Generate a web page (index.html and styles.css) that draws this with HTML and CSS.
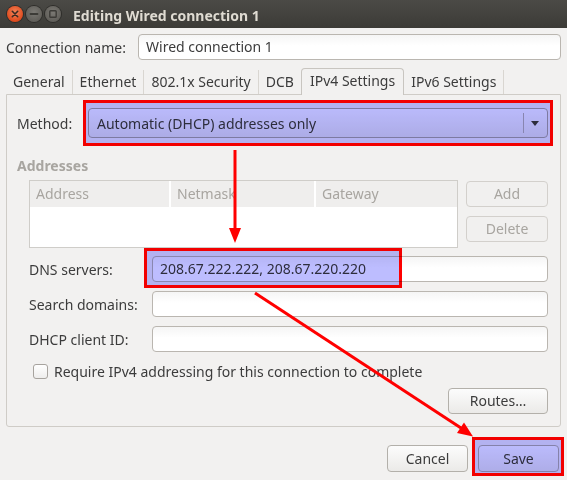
FILE: index.html
```html
<!DOCTYPE html>
<html>
<head>
<meta charset="utf-8">
<title>Editing Wired connection 1</title>
<link rel="stylesheet" href="styles.css">
</head>
<body>
<div class="window">
  <div class="titlebar">
    <div class="wbtns">
      <span class="wb close"><svg width="16" height="16" viewBox="0 0 16 16"><path d="M5.3 5.3 L10.7 10.7 M10.7 5.3 L5.3 10.7" stroke="#3a2a22" stroke-width="1.6" stroke-linecap="round"/></svg></span>
      <span class="wb gray"><svg width="16" height="16" viewBox="0 0 16 16"><path d="M4.5 8 H11.5" stroke="#3c3b37" stroke-width="1.8" stroke-linecap="round"/></svg></span>
      <span class="wb gray"><svg width="16" height="16" viewBox="0 0 16 16"><rect x="4.8" y="4.8" width="6.4" height="6.4" rx="0.8" fill="none" stroke="#3c3b37" stroke-width="1.4"/></svg></span>
    </div>
    <div class="title">Editing Wired connection 1</div>
  </div>

  <div class="content">
    <div class="conn-row">
      <div class="conn-label">Connection name:</div>
      <div class="entry conn-entry">Wired connection 1</div>
    </div>

    <div class="tabs">
      <div class="tab">General</div>
      <div class="tab">Ethernet</div>
      <div class="tab">802.1x Security</div>
      <div class="tab pre-active">DCB</div>
      <div class="tab active">IPv4 Settings</div>
      <div class="tab">IPv6 Settings</div>
    </div>

    <div class="panel">
      <div class="method-row">
        <div class="method-label">Method:</div>
        <div class="combo">
          <span class="combo-text">Automatic (DHCP) addresses only</span>
          <span class="combo-sep"></span>
          <span class="combo-arrow"></span>
        </div>
      </div>

      <div class="section-title">Addresses</div>

      <div class="addr">
        <div class="table">
          <div class="thead">
            <div class="th th-addr">Address</div>
            <div class="th th-mask">Netmask</div>
            <div class="th th-gw">Gateway</div>
          </div>
          <div class="tbody"></div>
        </div>
        <div class="addr-btns">
          <div class="btn disabled">Add</div>
          <div class="btn disabled">Delete</div>
        </div>
      </div>

      <div class="form">
        <div class="flabel">DNS servers:</div>
        <div class="entry">208.67.222.222, 208.67.220.220</div>
        <div class="flabel">Search domains:</div>
        <div class="entry"></div>
        <div class="flabel">DHCP client ID:</div>
        <div class="entry"></div>
      </div>

      <div class="check-row">
        <span class="checkbox"></span>
        <span class="check-label">Require IPv4 addressing for this connection to complete</span>
      </div>

      <div class="routes-row">
        <div class="btn routes">Routes…</div>
      </div>
    </div>

    <div class="dialog-btns">
      <div class="btn dlg">Cancel</div>
      <div class="btn dlg">Save</div>
    </div>
  </div>

  <div class="hl hl-method"></div>
  <div class="hl hl-dns"></div>
  <div class="hl hl-save"></div>

  <svg class="arrows" width="567" height="480" viewBox="0 0 567 480">
    <line x1="235" y1="150" x2="235" y2="230" stroke="#ff0000" stroke-width="3"/>
    <polygon points="229,228 241,228 235,243" fill="#ff0000"/>
    <line x1="255" y1="293" x2="461" y2="428" stroke="#ff0000" stroke-width="3"/>
    <polygon points="457,433 464,422.5 473,436.5" fill="#ff0000"/>
  </svg>
</div>
</body>
</html>
```

FILE: styles.css
```css
* { box-sizing: border-box; }
html, body { margin: 0; padding: 0; }
body {
  width: 567px;
  height: 480px;
  overflow: hidden;
  background: #f2f1f0;
  font-family: "Noto Sans", "DejaVu Sans", sans-serif;
  font-size: 14px;
  color: #3c3c3c;
}
.window { position: relative; width: 567px; height: 480px; }

/* title bar */
.titlebar {
  height: 28px;
  background: linear-gradient(#4b4a46, #3c3b37);
  display: flex;
  align-items: center;
  padding-left: 7px;
}
.wbtns { display: flex; gap: 3px; }
.wb {
  width: 16px; height: 16px;
  border-radius: 50%;
  display: flex;
}
.wb.close {
  background: radial-gradient(circle at 50% 40%, #f4855a, #df4a1d 70%);
  box-shadow: 0 0 0 1px #2e2d2a;
}
.wb.gray {
  background: radial-gradient(circle at 50% 40%, #7b7974, #5f5d58 75%);
  box-shadow: 0 0 0 1px #2e2d2a;
}
.title {
  margin-left: 12px;
  padding-top: 2px;
  font-weight: bold;
  font-size: 14px;
  color: #dfdbd2;
}

/* content */
.content { padding: 6px 6px 0 6px; }
.conn-row { display: flex; align-items: center; height: 26px; }
.conn-label { width: 132px; }
.entry {
  height: 26px;
  border: 1px solid #bab6b0;
  border-radius: 4px;
  background: linear-gradient(#f5f5f5, #ffffff 45%);
  padding-left: 7px;
  line-height: 24px;
  white-space: nowrap;
  overflow: hidden;
}
.conn-entry { flex: 1; }

/* tabs */
.tabs {
  margin-top: 8px;
  height: 26px;
  display: flex;
  align-items: flex-end;
}
.tab {
  height: 24px;
  line-height: 24px;
  padding: 0 7px;
  border-right: 1px solid #d9d6d1;
  white-space: nowrap;
}
.tab.pre-active { border-right: none; }
.tab.active {
  height: 27px;
  margin-bottom: -1px;
  padding: 0 8px;
  line-height: 24px;
  border: 1px solid #c8c5c0;
  border-bottom: none;
  border-radius: 4px 4px 0 0;
  background: #f2f1f0;
}

/* panel */
.panel {
  border: 1px solid #cfccc7;
  border-radius: 0 0 3px 3px;
  padding: 13px 12px 12px 10px;
}
.method-row { display: flex; align-items: center; height: 30px; }
.method-label { width: 71px; }
.combo {
  flex: 1;
  height: 30px;
  border: 1px solid #a9a5a1;
  border-radius: 4px;
  background: linear-gradient(#fbfbfb, #e9e8e6);
  display: flex;
  align-items: center;
  padding-left: 8px;
}
.combo-text { flex: 1; }
.combo-sep { width: 1px; height: 20px; background: #b8b4b0; }
.combo-arrow {
  width: 0; height: 0;
  margin: 0 8px 0 7px;
  border-left: 4.5px solid transparent;
  border-right: 4.5px solid transparent;
  border-top: 5px solid #3c3c3c;
}

.section-title {
  margin-top: 19px;
  height: 18px;
  line-height: 18px;
  font-weight: bold;
  color: #a8a5a0;
}

.addr {
  margin-top: 5px;
  margin-left: 12px;
  display: flex;
  gap: 8px;
}
.table {
  width: 429px;
  height: 68px;
  border: 1px solid #cfcdc9;
  background: #ffffff;
}
.thead { display: flex; gap: 2px; height: 26px; }
.th {
  background: #efeeed;
  color: #a8a5a0;
  line-height: 26px;
  padding-left: 6px;
}
.th-addr { width: 139px; }
.th-mask { width: 143px; }
.th-gw { width: 141px; }
.addr-btns { display: flex; flex-direction: column; gap: 9px; padding-top: 1px; }

.btn {
  height: 26px;
  border: 1px solid #b3b0aa;
  border-radius: 4px;
  background: linear-gradient(#fcfcfc, #ebeae8);
  text-align: center;
  line-height: 24px;
  white-space: nowrap;
}
.btn.disabled {
  width: 82px;
  border-color: #d3d0cc;
  background: #f1f0ef;
  color: #a8a5a0;
}

.form {
  margin-top: 8px;
  margin-left: 12px;
  display: grid;
  grid-template-columns: 123px 1fr;
  grid-auto-rows: 26px;
  row-gap: 9px;
  align-items: center;
}

.check-row {
  margin-top: 11px;
  margin-left: 16px;
  height: 16px;
  display: flex;
  align-items: center;
  gap: 6px;
}
.checkbox {
  width: 15px; height: 15px;
  border: 1px solid #a7a39e;
  border-radius: 3px;
  background: linear-gradient(#ffffff, #eeedec);
}

.routes-row {
  margin-top: 9px;
  display: flex;
  justify-content: flex-end;
}
.btn.routes { width: 100px; }

.dialog-btns {
  margin-top: 18px;
  margin-right: 2px;
  display: flex;
  justify-content: flex-end;
  gap: 10px;
}
.btn.dlg { width: 81px; height: 27px; line-height: 25px; }

/* annotations */
.hl {
  position: absolute;
  border: 3px solid #ff0000;
  background: #bdbdff;
  mix-blend-mode: multiply;
}
.hl-method { left: 83px; top: 100px; width: 470px; height: 46px; }
.hl-dns { left: 144px; top: 248px; width: 258px; height: 40px; }
.hl-save { left: 472px; top: 437px; width: 92px; height: 39px; }
.arrows { position: absolute; left: 0; top: 0; pointer-events: none; }
```
